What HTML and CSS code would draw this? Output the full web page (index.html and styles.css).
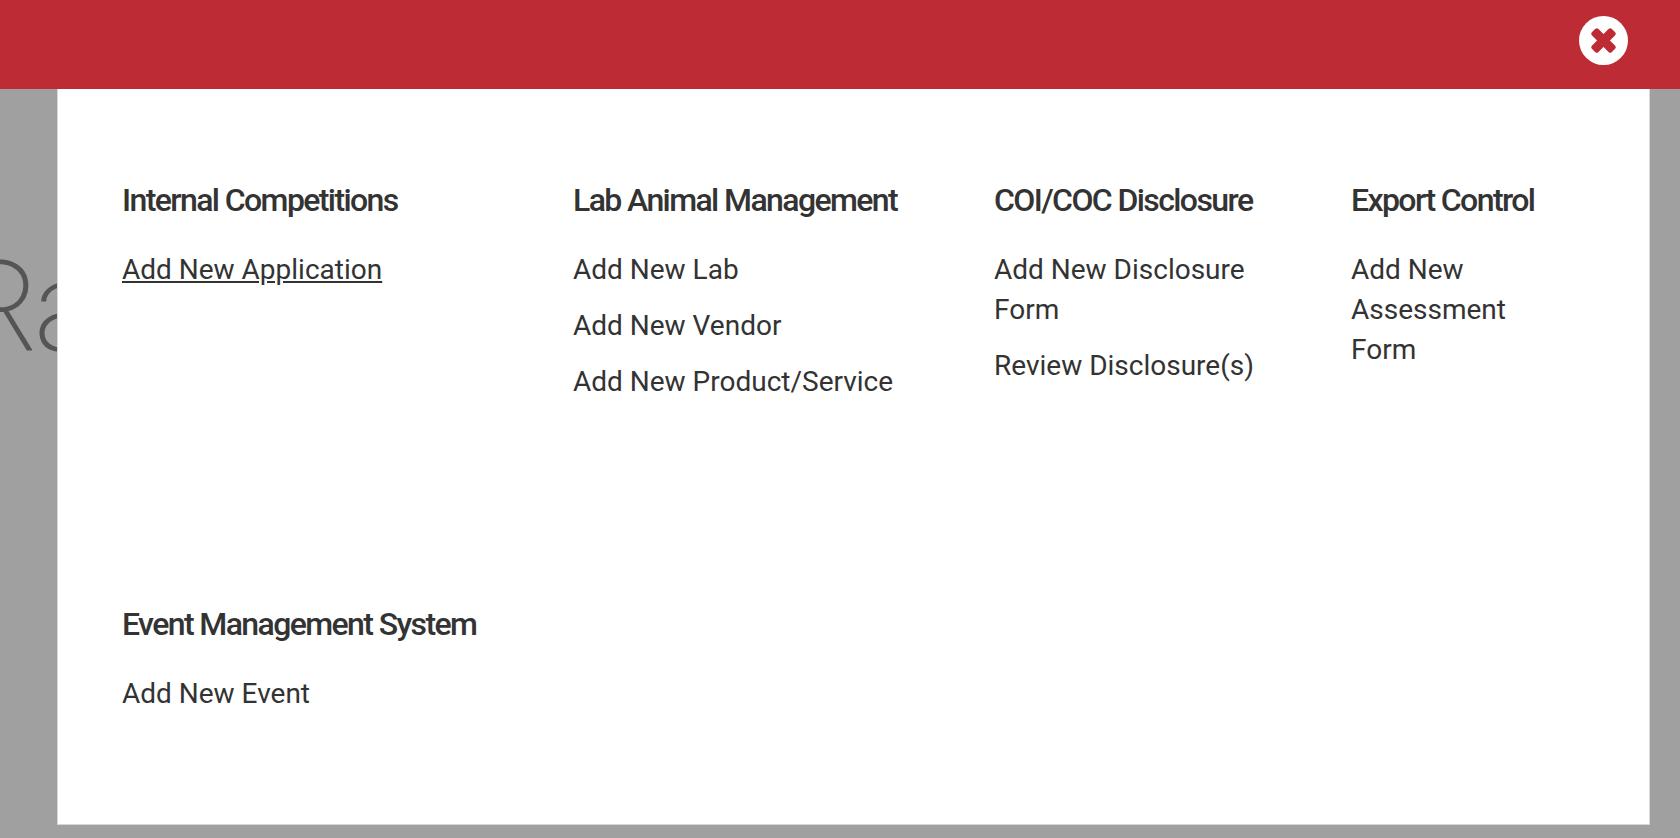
FILE: index.html
```html
<!DOCTYPE html>
<html lang="en">
<head>
  <meta charset="UTF-8" />
  <meta name="viewport" content="width=device-width, initial-scale=1.0"/>
  <title>Add New</title>
  <link rel="stylesheet" href="styles.css">
</head>
<body>

  <header class="topbar">
    <button class="close-btn" type="button" aria-label="Close menu">
      <svg viewBox="0 0 49 49" aria-hidden="true">
        <circle cx="24.5" cy="24.5" r="24.5" fill="#fff"/>
        <g fill="#bd2c34" transform="rotate(45 24.5 24.5)">
          <rect x="10.5" y="20" width="28" height="9" rx="2"/>
          <rect x="20" y="10.5" width="9" height="28" rx="2"/>
        </g>
      </svg>
    </button>
  </header>

  <main class="page">
    <div class="hero-title">Ra</div>

    <nav class="menu">
      <section class="group">
        <h2>Internal Competitions</h2>
        <ul>
          <li><a class="active" href="#">Add New Application</a></li>
        </ul>
      </section>

      <section class="group">
        <h2>Lab Animal Management</h2>
        <ul>
          <li><a href="#">Add New Lab</a></li>
          <li><a href="#">Add New Vendor</a></li>
          <li><a href="#">Add New Product/Service</a></li>
        </ul>
      </section>

      <section class="group">
        <h2>COI/COC Disclosure</h2>
        <ul>
          <li><a href="#">Add New Disclosure Form</a></li>
          <li><a href="#">Review Disclosure(s)</a></li>
        </ul>
      </section>

      <section class="group">
        <h2>Export Control</h2>
        <ul>
          <li><a href="#">Add New Assessment Form</a></li>
        </ul>
      </section>

      <section class="group">
        <h2>Event Management System</h2>
        <ul>
          <li><a href="#">Add New Event</a></li>
        </ul>
      </section>
    </nav>
  </main>

</body>
</html>
```

FILE: styles.css
```css
* {
  box-sizing: border-box;
  margin: 0;
  padding: 0;
}

body {
  font-family: Roboto, sans-serif;
  background: #a0a0a0;
  color: #333;
  min-height: 100vh;
  display: flex;
  flex-direction: column;
}

.topbar {
  background: #bd2c34;
  padding: 16px 52px 24px;
  display: flex;
  justify-content: flex-end;
}

.close-btn {
  width: 49px;
  height: 49px;
  border: none;
  border-radius: 50%;
  background: none;
  cursor: pointer;
}

.close-btn svg {
  display: block;
}

.page {
  position: relative;
  flex: 1;
  display: flex;
  padding: 0 30px 13px 57px;
  overflow: hidden;
}

/* page heading, partly covered by the open menu */
.hero-title {
  position: absolute;
  top: 143px;
  left: -43px;
  font-size: 128px;
  font-weight: 200;
  line-height: 150px;
  letter-spacing: -0.05em;
  color: #555;
}

.menu {
  position: relative;
  flex: 1;
  display: grid;
  grid-template-columns: 359fr 329fr 265fr 218fr;
  align-content: start;
  gap: 202px 92px;
  padding: 91px 80px 91px 64px;
  background: #fff;
  border: 1px solid #d8d8d8;
  border-top: none;
}

.group {
  min-width: 0;
}

h2 {
  font-size: 32px;
  font-weight: 500;
  line-height: 40px;
  letter-spacing: -0.05em;
  margin-bottom: 30px;
  white-space: nowrap;
}

ul {
  list-style: none;
}

li {
  font-size: 28px;
  line-height: 40px;
}

li + li {
  margin-top: 16px;
}

a {
  color: #333;
  text-decoration: none;
}

a:hover,
a.active {
  text-decoration: underline;
}
```
